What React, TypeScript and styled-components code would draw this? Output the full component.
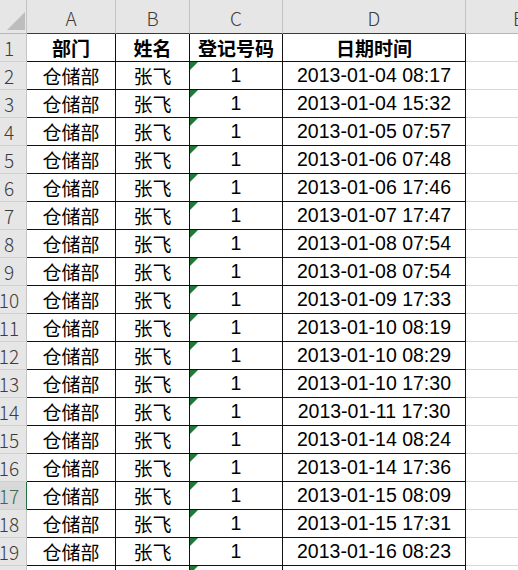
import React from "react";
import styled, { createGlobalStyle, css } from "styled-components";

const Global = createGlobalStyle`
  html, body { margin: 0; padding: 0; background: #fff; overflow: hidden; }
  #root { width: 518px; height: 570px; overflow: hidden; }
`;

const Sheet = styled.div`
  display: grid;
  grid-template-columns: 27px 89px 74px 93px 183px 52px;
  grid-template-rows: 34px repeat(20, 28px);
  width: 518px;
  height: 570px;
  overflow: hidden;
  background: #fff;
`;

const ColHead = styled.div<{ $first?: boolean }>`
  box-sizing: border-box;
  background: #e6e6e6;
  border-right: 1px solid #c4c4c4;
  border-bottom: 1px solid ${(p) => (p.$first ? "#aaa" : "#3a3a3a")};
  display: flex;
  align-items: flex-end;
  justify-content: center;
  padding-bottom: 2px;
  font-family: "Noto Sans CJK SC", "Noto Sans", sans-serif;
  font-weight: 300;
  font-size: 19px;
  line-height: 26px;
  color: #3c3c3c;
  overflow: hidden;
`;

const ColHeadE = styled(ColHead)`
  border-right: none;
  border-bottom: 1px solid #b8b8b8;
  justify-content: flex-end;
  & > span { margin-right: -6px; }
`;

const Corner = styled.div`
  box-sizing: border-box;
  background: #e6e6e6;
  border-right: 1px solid #c4c4c4;
  border-bottom: 1px solid #b8b8b8;
  position: relative;
`;

const CornerMark = styled.svg`
  position: absolute;
  left: 7px;
  top: 12px;
`;

const RowHead = styled.div<{ $active?: boolean }>`
  box-sizing: border-box;
  background: ${(p) => (p.$active ? "#d9d9d9" : "#e6e6e6")};
  border-right: 1px solid ${(p) => (p.$active ? "#217346" : "#c4c4c4")};
  border-bottom: 1px solid #d0d0d0;
  display: flex;
  align-items: center;
  justify-content: center;
  padding-right: 8px;
  font-family: "Noto Sans CJK SC", "Noto Sans", sans-serif;
  font-weight: 300;
  font-size: 19px;
  color: ${(p) => (p.$active ? "#3d6b4e" : "#3c3c3c")};
  white-space: nowrap;
`;

const Cell = styled.div<{ $kind: "cn" | "num" | "head" }>`
  box-sizing: border-box;
  position: relative;
  border-right: 1px solid #111;
  border-bottom: 1px solid #111;
  display: flex;
  align-items: center;
  justify-content: center;
  white-space: nowrap;
  color: #000;
  overflow: hidden;
  ${(p) =>
    p.$kind === "num"
      ? css`
          font-family: "Liberation Sans", Arial, sans-serif;
          font-size: 19.5px;
        `
      : css`
          font-family: "Noto Sans CJK SC", sans-serif;
          font-size: 19px;
          font-weight: ${p.$kind === "head" ? 700 : 400};
        `}
`;

const Mark = styled.span`
  position: absolute;
  left: 0;
  top: 0;
  width: 0;
  height: 0;
  border-top: 8px solid #1f7a36;
  border-right: 8px solid transparent;
`;

const Blank = styled.div`
  box-sizing: border-box;
  border-bottom: 1px solid #d6d6d6;
`;

const BlankData = styled.div`
  box-sizing: border-box;
  position: relative;
  border-right: 1px solid #111;
`;

const dates = [
  "2013-01-04 08:17",
  "2013-01-04 15:32",
  "2013-01-05 07:57",
  "2013-01-06 07:48",
  "2013-01-06 17:46",
  "2013-01-07 17:47",
  "2013-01-08 07:54",
  "2013-01-08 07:54",
  "2013-01-09 17:33",
  "2013-01-10 08:19",
  "2013-01-10 08:29",
  "2013-01-10 17:30",
  "2013-01-11 17:30",
  "2013-01-14 08:24",
  "2013-01-14 17:36",
  "2013-01-15 08:09",
  "2013-01-15 17:31",
  "2013-01-16 08:23",
];

export default function App() {
  return (
    <>
      <Global />
      <Sheet>
        <Corner>
          <CornerMark width="18" height="18" viewBox="0 0 18 18">
            <polygon points="18,0 18,18 0,18" fill="#bdbdbd" />
          </CornerMark>
        </Corner>
        <ColHead>A</ColHead>
        <ColHead>B</ColHead>
        <ColHead>C</ColHead>
        <ColHead>D</ColHead>
        <ColHeadE $first>
          <span>E</span>
        </ColHeadE>

        <RowHead>1</RowHead>
        <Cell $kind="head">部门</Cell>
        <Cell $kind="head">姓名</Cell>
        <Cell $kind="head">登记号码</Cell>
        <Cell $kind="head">日期时间</Cell>
        <Blank />

        {dates.map((d, i) => (
          <React.Fragment key={i}>
            <RowHead $active={i + 2 === 17}>{i + 2}</RowHead>
            <Cell $kind="cn">仓储部</Cell>
            <Cell $kind="cn">张飞</Cell>
            <Cell $kind="num">
              <Mark />1
            </Cell>
            <Cell $kind="num">{d}</Cell>
            <Blank />
          </React.Fragment>
        ))}

        <RowHead>20</RowHead>
        <BlankData />
        <BlankData />
        <BlankData>
          <Mark />
        </BlankData>
        <BlankData />
        <Blank />
      </Sheet>
    </>
  );
}
